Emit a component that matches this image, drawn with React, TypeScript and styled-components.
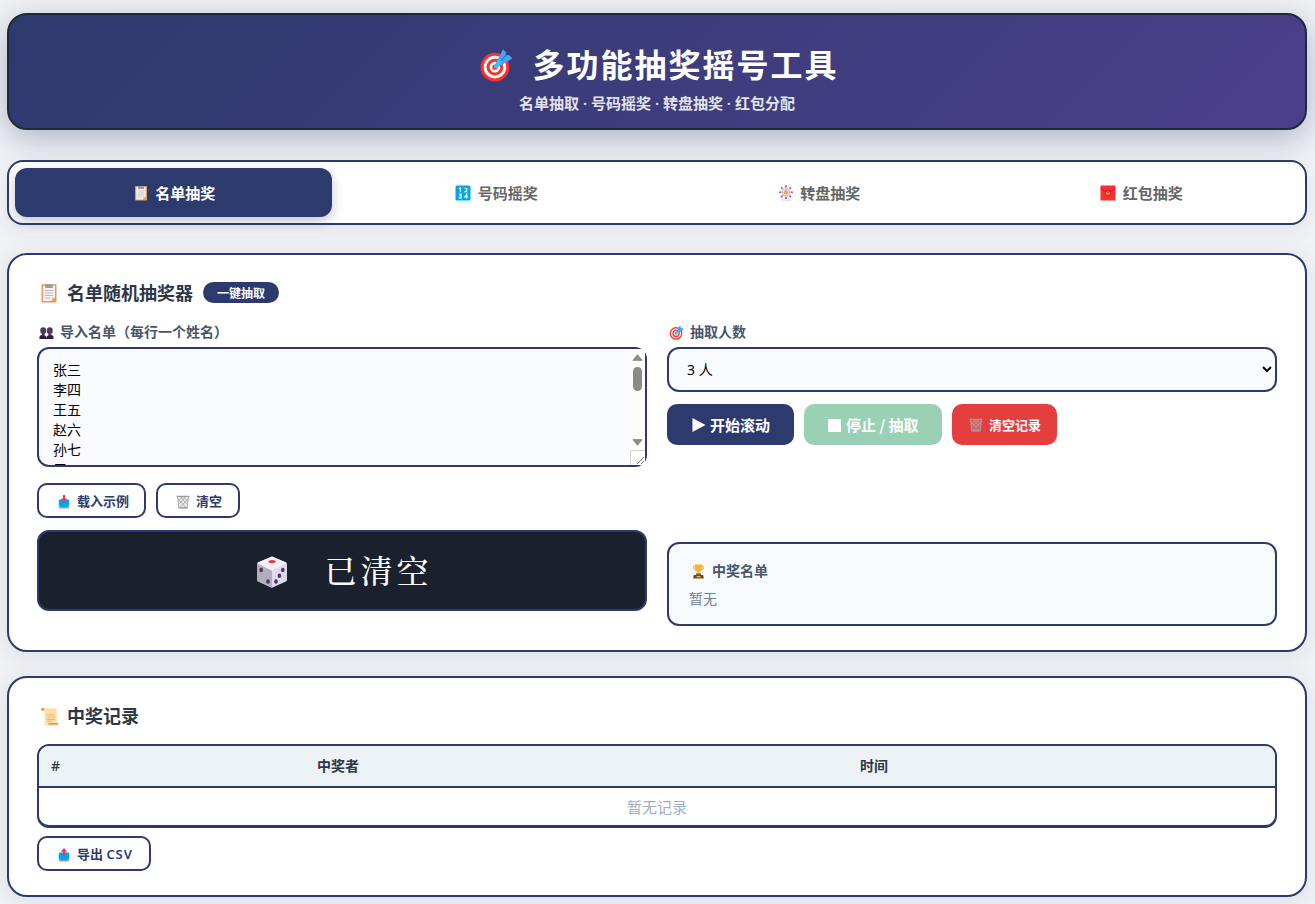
import React from "react";
import styled, { createGlobalStyle, css } from "styled-components";

const NAVY = "#2d3a6e";

const GlobalStyle = createGlobalStyle`
  *, *::before, *::after { box-sizing: border-box; }
  body {
    margin: 0;
    min-height: 904px;
    overflow: hidden;
    background: #f0f2f5;
    color: #2d3748;
    font-family: "Noto Sans", "Noto Sans CJK SC", sans-serif;
  }
  button, select, textarea { font-family: inherit; }
`;

const Page = styled.div`
  width: 1300px;
  margin: 0 0 0 7px;
  padding-top: 13px;
`;

const Header = styled.header`
  height: 117px;
  padding-top: 25px;
  border: 2px solid #1f2937;
  border-radius: 20px;
  background: linear-gradient(135deg, #2d3a6e 0%, #4c3f8a 100%);
  box-shadow: 0 8px 32px rgba(45, 58, 110, 0.35);
  color: #fff;
  text-align: center;
`;

const HeaderTitle = styled.h1`
  display: flex;
  align-items: center;
  justify-content: center;
  height: 50px;
  margin: 0;
  font-size: 32px;
  font-weight: 700;
  line-height: 50px;
  letter-spacing: 2px;
`;

const HeaderSub = styled.p`
  margin: 1px 0 0;
  font-size: 15px;
  line-height: 24px;
  font-weight: 600;
  opacity: 0.85;
`;

const Icon = styled.svg<{ $size: number; $l?: number; $r?: number; $y?: number }>`
  flex: none;
  display: block;
  width: ${(p) => p.$size}px;
  height: ${(p) => p.$size}px;
  margin: 0 ${(p) => p.$r ?? 0}px 0 ${(p) => p.$l ?? 0}px;
  transform: translateY(${(p) => p.$y ?? 0}px);
`;

const Tabs = styled.nav`
  display: flex;
  gap: 6px;
  height: 65px;
  margin-top: 30px;
  padding: 6px;
  border: 2px solid ${NAVY};
  border-radius: 16px;
  background: #fff;
  box-shadow: 0 4px 20px rgba(45, 58, 110, 0.08);
`;

const Tab = styled.button<{ $active?: boolean }>`
  flex: 1;
  display: flex;
  align-items: center;
  justify-content: center;
  padding: 0;
  border: 0;
  border-radius: 12px;
  background: transparent;
  color: #666;
  font-size: 15px;
  font-weight: 700;
  ${(p) =>
    p.$active &&
    css`
      background: ${NAVY};
      color: #fff;
      box-shadow: 0 4px 12px rgba(45, 58, 110, 0.3);
    `}
`;

const Card = styled.section<{ $h: number; $gap: number }>`
  height: ${(p) => p.$h}px;
  margin-top: ${(p) => p.$gap}px;
  padding: 24px 28px;
  border: 2px solid ${NAVY};
  border-radius: 20px;
  background: #fff;
  box-shadow: 0 4px 24px rgba(45, 58, 110, 0.1);
`;

const CardTitle = styled.h2`
  display: flex;
  align-items: center;
  height: 28px;
  margin: 0;
  color: #2d3748;
  font-size: 18px;
  font-weight: 700;
  line-height: 28px;
`;

const Badge = styled.span`
  height: 21px;
  margin: 0 0 2px 10px;
  padding: 0 14px;
  border-radius: 11px;
  background: ${NAVY};
  color: #fff;
  font-size: 12px;
  line-height: 23px;
`;

const Columns = styled.div`
  display: grid;
  grid-template-columns: 1fr 1fr;
  gap: 20px;
  margin-top: 13px;
`;

const Column = styled.div`
  display: flex;
  flex-direction: column;
`;

const Label = styled.label`
  display: flex;
  align-items: center;
  height: 24px;
  margin-bottom: 3px;
  color: #4a5568;
  font-size: 14px;
  font-weight: 700;
  line-height: 24px;
`;

const ListBox = styled.div`
  display: flex;
  height: 120px;
  border: 2px solid ${NAVY};
  border-radius: 12px;
  background: #fafbfe;
`;

const ListInput = styled.textarea`
  flex: 1;
  min-width: 0;
  height: 116px;
  padding: 11px 14px 0;
  border: 0;
  border-radius: 10px 0 0 10px;
  outline: 0;
  resize: none;
  overflow: hidden;
  background: transparent;
  color: #000;
  font-size: 14px;
  line-height: 20px;
`;

const ScrollTrack = styled.div`
  display: flex;
  flex-direction: column;
  align-items: center;
  width: 15px;
  height: 116px;
  padding-top: 5px;
  background: #fcfcfc;
`;

const Thumb = styled.div`
  width: 9px;
  height: 24px;
  margin: 6px 0 48px;
  border-radius: 5px;
  background: #8b8b8b;
`;

const Count = styled.select`
  width: 100%;
  height: 45px;
  padding: 0 14px;
  border: 2px solid ${NAVY};
  border-radius: 12px;
  background: #fafbfe;
  color: #000;
  font-size: 14px;
`;

const Row = styled.div<{ $top: number }>`
  display: flex;
  gap: 10px;
  margin-top: ${(p) => p.$top}px;
`;

const OutlineButton = styled.button<{ $w: number }>`
  display: flex;
  align-items: center;
  width: ${(p) => p.$w}px;
  height: 35px;
  padding: 0 0 0 18px;
  border: 2px solid ${NAVY};
  border-radius: 10px;
  background: #fff;
  color: ${NAVY};
  font-size: 13px;
  font-weight: 700;
  white-space: pre;
`;

const Format = styled.span`
  font-weight: 600;
  letter-spacing: 0.9px;
`;

const SolidButton = styled.button<{ $w: number; $bg: string; $small?: boolean }>`
  display: flex;
  align-items: center;
  width: ${(p) => p.$w}px;
  height: 41px;
  padding: 0 0 0 ${(p) => (p.$small ? 17 : 24)}px;
  border: 0;
  border-radius: 10px;
  background: ${(p) => p.$bg};
  color: #fff;
  font-family: "Noto Sans CJK SC", sans-serif;
  font-size: ${(p) => (p.$small ? 13 : 15)}px;
  font-weight: 700;
  white-space: pre;
`;

const Display = styled.div`
  display: flex;
  align-items: center;
  justify-content: center;
  height: 81px;
  margin-top: 12px;
  padding-left: 5px;
  border: 2px solid ${NAVY};
  border-radius: 12px;
  background: #1a202c;
  color: #f7fafc;
  font-family: "Noto Serif CJK SC", "Liberation Mono", serif;
  font-size: 32px;
  font-weight: 500;
  line-height: 46px;
  letter-spacing: 4px;
`;

const DisplayText = styled.span`
  margin-top: -3px;
`;

const Winners = styled.div`
  height: 84px;
  margin-top: 97px;
  padding: 15px 20px;
  border: 2px solid ${NAVY};
  border-radius: 12px;
  background: #f7fafc;
`;

const WinnersTitle = styled.div`
  display: flex;
  align-items: center;
  height: 24px;
  color: #4a5568;
  font-size: 14px;
  font-weight: 700;
  line-height: 24px;
`;

const WinnersEmpty = styled.div`
  margin-top: 5px;
  color: #718096;
  font-size: 14px;
  line-height: 22px;
`;

const Table = styled.div`
  height: 84px;
  margin-top: 14px;
  border: 2px solid ${NAVY};
  border-bottom-width: 3px;
  border-radius: 12px;
  overflow: hidden;
`;

const TableHead = styled.div`
  display: grid;
  grid-template-columns: 266px 543px 1fr;
  height: 42px;
  border-bottom: 2px solid ${NAVY};
  background: #edf2f7;
  color: #2d3748;
  font-size: 14px;
  font-weight: 700;
  line-height: 40px;
`;

const HeadCell = styled.span<{ $plain?: boolean }>`
  padding-left: 12px;
  ${(p) => p.$plain && "font-weight: 500;"}
`;

const TableEmpty = styled.div`
  color: #a0aec0;
  font-size: 15px;
  line-height: 38px;
  text-align: center;
`;

type IconProps = { size: number; l?: number; r?: number; y?: number };

function Glyph({ size, l, r, y, children }: IconProps & { children: React.ReactNode }) {
  return (
    <Icon viewBox="0 0 32 32" $size={size} $l={l} $r={r} $y={y} aria-hidden="true">
      {children}
    </Icon>
  );
}

const Target = (p: IconProps) => (
  <Glyph {...p}>
    <circle cx="15" cy="18" r="13.5" fill="#f8312f" />
    <circle cx="15" cy="18" r="10.6" fill="#fff" />
    <circle cx="15" cy="18" r="7.9" fill="#f8312f" />
    <circle cx="15" cy="18" r="5" fill="#fff" />
    <circle cx="15" cy="18" r="2.5" fill="#f8312f" />
    <path d="M15 18 25 8" stroke="#83cbff" strokeWidth="1.6" strokeLinecap="round" />
    <path d="M16.500 12.500 20 6.500 22.500 1.500l3.200 2.800-.8 2.800 3.200-.5 3.400 3-5.500 3.500-6 3.700-4.300 1Z" fill="#46a4fb" />
    <path d="m16 17 4-4.500" fill="none" stroke="#26c9fc" strokeWidth="4" strokeLinecap="round" />
    <path d="m20.500 12 5-5" stroke="#1a7bd6" strokeWidth="1" />
  </Glyph>
);

const Clipboard = (p: IconProps) => (
  <Glyph {...p}>
    <rect x="4" y="2" width="24" height="29" rx="1.5" fill="#e39d54" />
    <path d="M6.500 4.500h19V23l-5.500 5.800H6.500Z" fill="#f4f4f4" />
    <path d="M25.500 23H20v5.800Z" fill="#cdc4d6" />
    <path d="M10 2h12v6H10Z" fill="#9b9b9b" />
    <path d="M9.500 12h13M9.500 16h13M9.500 20h13M9.500 24h8" stroke="#b4acbc" strokeWidth="1.4" />
  </Glyph>
);

const Numbers = (p: IconProps) => (
  <Glyph {...p}>
    <rect x="1" y="1" width="30" height="30" rx="3" fill="#00a6ed" />
    <g fill="none" stroke="#fff" strokeWidth="2.2">
      <path d="M8 7.500 10.800 6v8.500" />
      <path d="M19.500 7h4.200v3.200L19.800 13.400h5" />
      <path d="M8 18.500h4.500l-2.500 3h2.500v4.200H7.500" />
      <path d="M23.500 27v-9l-4 6h6" />
    </g>
  </Glyph>
);

const Ferris = (p: IconProps) => {
  const spots = [0, 45, 90, 135, 180, 225, 270, 315];
  return (
    <Glyph {...p}>
      <path d="m16 15-7 15M16 15l7 15" stroke="#dccfe8" strokeWidth="1.2" />
      <path d="M6 30.300h20" stroke="#cdbddb" strokeWidth="1.4" />
      <circle cx="16" cy="14.500" r="7.500" fill="none" stroke="#e8bd90" strokeWidth="2" />
      {spots.map((a) => (
        <g key={a} transform={`rotate(${a} 16 14.500)`}>
          <path d="M16 14.500V3.500" stroke="#c9a9a4" strokeWidth="1.7" />
          <circle cx="16" cy="2.600" r="2.200" fill="#8d65c5" />
        </g>
      ))}
      <circle cx="16" cy="14.500" r="4" fill="#f3a83c" />
    </Glyph>
  );
};

const Envelope = (p: IconProps) => (
  <Glyph {...p}>
    <rect x="1" y="1" width="30" height="30" fill="#f8312f" />
    <path d="M1 7 11 13.500M31 7 21 13.500" stroke="#ca0b4a" strokeWidth="1.7" />
    <circle cx="16" cy="16" r="6" fill="#d01d3c" />
    <path d="M12.800 14v4.500h6.400V14M16 12v6.500" fill="none" stroke="#f9a13c" strokeWidth="1.8" />
  </Glyph>
);

const People = (p: IconProps) => (
  <Glyph {...p}>
    <path d="M1 30v-3c0-4 3-6 7-6s7 2 8 6c1-4 4-6 8-6s7 2 7 6v3Z" fill="#321b41" />
    <ellipse cx="9" cy="12" rx="6.300" ry="7" fill="#533566" />
    <ellipse cx="23" cy="12" rx="6.300" ry="7" fill="#533566" />
    <path d="M6 17h6v6H6ZM20 17h6v6h-6Z" fill="#533566" />
  </Glyph>
);

const Inbox = ({ up, ...p }: IconProps & { up?: boolean }) => (
  <Glyph {...p}>
    <path d="M4 25h24v4a2 2 0 0 1-2 2H6a2 2 0 0 1-2-2Z" fill="#a6a6a6" />
    <path d="M6 10h20l2 3v11l-5 4H9l-5-4V13Z" fill="#00a6ed" />
    <path d="m4 25 5 3h14l5-3v3H4Z" fill="#d3d3d3" />
    {up ? (
      <path d="M16 0 8.500 8.500H13.500v8h5v-8H23.500Z" fill="#f8315f" />
    ) : (
      <path d="M13.500 0h5v8.500h5L16 17 8.500 8.500H13.500Z" fill="#f8315f" />
    )}
  </Glyph>
);

const Trash = ({ bg = "#ececec", ...p }: IconProps & { bg?: string }) => (
  <Glyph {...p}>
    <path d="M3 3h26l-3 27H6Z" fill={bg} />
    <path
      d="m4 8 19 21M10 4l17 19M17 4l11 12M28 8 9 29M22 4 5 23M15 4 4 16M3.500 4l2.800 25h19.400L28.500 4"
      fill="none"
      stroke="#a3a3a3"
      strokeWidth="1.8"
    />
    <path d="M1.500 3h29M6 29.500h20" stroke="#9b9b9b" strokeWidth="3" />
  </Glyph>
);

const Dice = (p: IconProps) => (
  <Glyph {...p}>
    <path d="m16 .500 13.600 5.800q1.400.6 1.400 2v15.400q0 1.300-1.200 1.900L16 31.800 2.200 25.600Q1 25 1 23.700V8.300q0-1.400 1.400-2Z" fill="#e1d8ec" />
    <path d="M1 7.300 16 14.500v17.300L2.200 25.600Q1 25 1 23.700Z" fill="#b4acbc" />
    <path d="M16 .500 29.600 6.300l1 1L16 14.500 1.400 7.300l1-1Z" fill="#f3eef8" />
    <ellipse cx="16" cy="5.600" rx="3.500" ry="1.600" fill="#f8312f" />
    <g fill="#433b6b">
      <ellipse cx="5.200" cy="14" rx="1.800" ry="2.300" />
      <ellipse cx="12" cy="25.500" rx="1.800" ry="2.300" />
      <ellipse cx="26.800" cy="14" rx="1.800" ry="2.300" />
      <ellipse cx="23.400" cy="19.700" rx="1.800" ry="2.300" />
      <ellipse cx="20" cy="25.500" rx="1.800" ry="2.300" />
    </g>
  </Glyph>
);

const Trophy = (p: IconProps) => (
  <Glyph {...p}>
    <path d="M9 5H5c0 5.500 2 7.500 6 8M23 5h4c0 5.500-2 7.500-6 8" fill="none" stroke="#f3ad61" strokeWidth="2" />
    <path d="M8 1h16v8c0 5-2.500 7-6 8v4h-4v-4c-3.500-1-6-2-6-8Z" fill="#ffb02e" />
    <path d="M10.500 20h11v4h-11Z" fill="#8a5a3c" />
    <path d="M6 23.500h20L27.500 31h-23Z" fill="#6d4534" />
    <rect x="12" y="25.500" width="8" height="3" fill="#ffb02e" />
  </Glyph>
);

const Scroll = (p: IconProps) => (
  <Glyph {...p}>
    <path d="M2 2h23q3 0 3 3v22H12q-4 0-4-4V6H2Z" fill="#ffdea7" />
    <path d="M2 2h5v4H4Q1.500 6 2 2Z" fill="#d3883e" />
    <path d="M8 24v4q0 3 3.500 3H28q3 0 3-4H14v3Z" fill="#ffdea7" />
    <path d="M14 27h17q0 3-3 3H14Z" fill="#e39d54" />
    <path d="M12 13h13M12 17h13M12 21h13M12 24h8" stroke="#e8a562" strokeWidth="1.300" />
  </Glyph>
);

const Play = (p: IconProps) => (
  <Glyph {...p}>
    <path d="M1 0 31 16 1 32Z" fill="#fff" />
  </Glyph>
);

const Stop = (p: IconProps) => (
  <Glyph {...p}>
    <path d="M0 0h32v32H0Z" fill="#fff" />
  </Glyph>
);

const Corner = styled.svg`
  flex: none;
  margin-top: 4px;
`;

function ScrollBar() {
  return (
    <ScrollTrack>
      <svg width="11" height="7" viewBox="0 0 11 7">
        <path d="M5.500.700 10 6.300H1Z" fill="#8b8b8b" stroke="#8b8b8b" strokeLinejoin="round" />
      </svg>
      <Thumb />
      <svg width="11" height="7" viewBox="0 0 11 7">
        <path d="M5.500 6.300 10 .700H1Z" fill="#8b8b8b" stroke="#8b8b8b" strokeLinejoin="round" />
      </svg>
      <Corner width="15" height="15" viewBox="0 0 15 15">
        <path d="M0 0h15v15H0Z" fill="#fff" />
        <path d="M.5 15V.5H15" fill="none" stroke="#d5d5d5" />
        <path d="m7 14 7-7M11 14l3-3" stroke="#666" strokeWidth="0.9" />
      </Corner>
    </ScrollTrack>
  );
}

const names = "张三\n李四\n王五\n赵六\n孙七\n周八\n吴九\n郑十";

export default function App() {
  return (
    <>
      <GlobalStyle />
      <Page>
        <Header>
          <HeaderTitle>
            <Target size={34} l={4} r={19} />
            多功能抽奖摇号工具
          </HeaderTitle>
          <HeaderSub>名单抽取 · 号码摇奖 · 转盘抽奖 · 红包分配</HeaderSub>
        </Header>

        <Tabs>
          <Tab $active>
            <Clipboard size={16} l={2} r={6} />
            名单抽奖
          </Tab>
          <Tab>
            <Numbers size={16} l={1.5} r={6.5} />
            号码摇奖
          </Tab>
          <Tab>
            <Ferris size={16} l={2} r={6} />
            转盘抽奖
          </Tab>
          <Tab>
            <Envelope size={16} l={1.5} r={6.5} />
            红包抽奖
          </Tab>
        </Tabs>

        <Card $h={399} $gap={28}>
          <CardTitle>
            <Clipboard size={20} l={2} r={8} />
            名单随机抽奖器
            <Badge>一键抽取</Badge>
          </CardTitle>
          <Columns>
            <Column>
              <Label>
                <People size={15} l={2} r={6} />
                导入名单（每行一个姓名）
              </Label>
              <ListBox>
                <ListInput defaultValue={names} />
                <ScrollBar />
              </ListBox>
              <Row $top={16}>
                <OutlineButton $w={109}>
                  <Inbox size={14} r={6} y={1} />
                  载入示例
                </OutlineButton>
                <OutlineButton $w={84}>
                  <Trash size={14} r={6} y={1} />
                  清空
                </OutlineButton>
              </Row>
              <Display>
                <Dice size={32} r={36} y={1} />
                <DisplayText>已清空</DisplayText>
              </Display>
            </Column>
            <Column>
              <Label>
                <Target size={15} l={2} r={6} />
                抽取人数
              </Label>
              <Count defaultValue="3">
                <option value="3">3 人</option>
              </Count>
              <Row $top={12}>
                <SolidButton $w={127} $bg={NAVY}>
                  <Play size={14} l={1} r={4} />
                  开始滚动
                </SolidButton>
                <SolidButton $w={138} $bg="#9ad0b5">
                  <Stop size={13} r={5} y={1} />
                  停止 / 抽取
                </SolidButton>
                <SolidButton $w={105} $bg="#e53e3e" $small>
                  <Trash size={14} r={6} bg="#e25a5a" />
                  清空记录
                </SolidButton>
              </Row>
              <Winners>
                <WinnersTitle>
                  <Trophy size={15} l={2} r={6} />
                  中奖名单
                </WinnersTitle>
                <WinnersEmpty>暂无</WinnersEmpty>
              </Winners>
            </Column>
          </Columns>
        </Card>

        <Card $h={221} $gap={24}>
          <CardTitle>
            <Scroll size={19} l={3} r={8} />
            中奖记录
          </CardTitle>
          <Table>
            <TableHead>
              <HeadCell $plain>#</HeadCell>
              <HeadCell>中奖者</HeadCell>
              <HeadCell>时间</HeadCell>
            </TableHead>
            <TableEmpty>暂无记录</TableEmpty>
          </Table>
          <Row $top={8}>
            <OutlineButton $w={114}>
              <Inbox up size={14} r={6} y={1} />
              <span>
                导出 <Format>CSV</Format>
              </span>
            </OutlineButton>
          </Row>
        </Card>
      </Page>
    </>
  );
}
